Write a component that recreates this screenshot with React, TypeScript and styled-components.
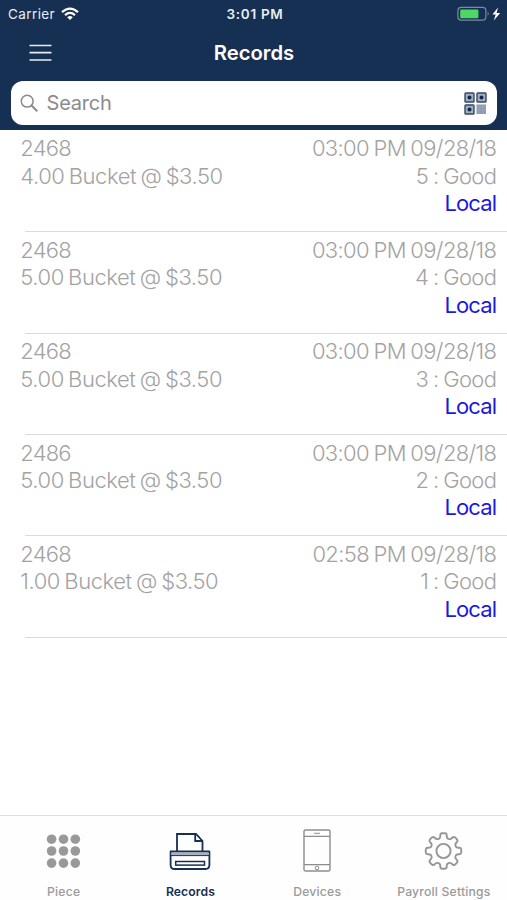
import React from "react";
import styled, { createGlobalStyle } from "styled-components";

const NAVY = "#163053";
const GREY = "#a3a3a3";

const GlobalStyle = createGlobalStyle`
  * { box-sizing: border-box; }
  body { margin: 0; background: #fff; }
`;

const Screen = styled.div`
  width: 507px;
  height: 900px;
  display: flex;
  flex-direction: column;
  overflow: hidden;
  background: #fff;
  font-family: Inter, "Liberation Sans", sans-serif;
`;

const Header = styled.header`
  flex: none;
  height: 130.4px;
  background: ${NAVY};
  color: #fff;
`;

const StatusBar = styled.div`
  display: grid;
  grid-template-columns: 1fr auto 1fr;
  align-items: center;
  height: 27px;
  padding: 0 5px 0 8px;
  font-size: 13.5px;
  color: #e8eef5;
`;

const Carrier = styled.div`
  display: flex;
  align-items: center;
  gap: 6px;
  letter-spacing: 0.4px;
`;

const Clock = styled.div`
  font-size: 13.5px;
  font-weight: 600;
  letter-spacing: 0.7px;
`;

const Power = styled.div`
  display: flex;
  justify-content: flex-end;
  align-items: center;
`;

const NavBar = styled.div`
  display: grid;
  grid-template-columns: 80px 1fr 80px;
  align-items: center;
  height: 50px;
`;

const MenuButton = styled.button`
  display: flex;
  padding: 2px 0 0 29px;
  border: 0;
  background: none;
`;

const Title = styled.h1`
  margin: 0;
  padding: 2px 0 0 1px;
  text-align: center;
  font-size: 20.3px;
  line-height: 26px;
  font-weight: 600;
`;

const SearchBox = styled.div`
  display: flex;
  align-items: center;
  height: 44px;
  margin: 4.4px 10px 0 11px;
  padding: 0 10px 0 9px;
  border-radius: 12px;
  background: #fff;
`;

const SearchLabel = styled.span`
  flex: 1;
  margin-left: 7.5px;
  font-size: 20px;
  letter-spacing: -0.2px;
  color: #8b8b8d;
`;

const List = styled.main`
  flex: 1;
  padding-top: 0.5px;
`;

const Row = styled.section`
  height: 101.4px;
  padding: 4.5px 10px 0 20.3px;
  display: grid;
  grid-template-columns: auto auto;
  grid-template-rows: repeat(3, 27.4px) 1fr;
  justify-content: space-between;
  font-size: 22px;
  line-height: 27.4px;
  font-weight: 300;
  color: ${GREY};
  white-space: nowrap;
`;

const Cell = styled.span<{ $spacing?: number; $word?: number }>`
  letter-spacing: ${(p) => p.$spacing ?? 0}px;
  word-spacing: ${(p) => p.$word ?? 0}px;
`;

const EndCell = styled(Cell)`
  text-align: right;
  margin-right: ${(p) => -(p.$spacing ?? 0)}px;
`;

const Local = styled(EndCell)`
  grid-column: 2;
  font-weight: 400;
  color: #1c18dc;
`;

const Rule = styled.div`
  grid-column: 1 / -1;
  align-self: end;
  height: 1px;
  margin: 0 -10px 0 4.7px;
  background: #dcdcdd;
`;

const TabBar = styled.nav`
  flex: none;
  height: 85px;
  display: grid;
  grid-template-columns: repeat(4, 1fr);
  border-top: 1px solid #dedede;
  background: #fefefe;
`;

const Tab = styled.div<{ $active?: boolean }>`
  display: flex;
  flex-direction: column;
  align-items: center;
  padding-left: 0.6px;
  color: ${(p) => (p.$active ? NAVY : "#9a9a9a")};
  svg { margin-top: 11px; }
`;

const TabLabel = styled.span<{ $active?: boolean; $spacing: number }>`
  margin-top: 9px;
  font-size: 12.2px;
  line-height: 16px;
  font-weight: ${(p) => (p.$active ? 600 : 500)};
  letter-spacing: ${(p) => p.$spacing}px;
  white-space: nowrap;
`;

const Wifi = () => (
  <svg width="18" height="14" viewBox="0 0 18 14" fill="none" stroke="#fff" strokeWidth="2.2">
    <path d="M1 5.1Q9-2 17 5.1" />
    <path d="M4 8.1Q9 3.8 14 8.1" />
    <path d="M6.2 10.2Q9 8 11.8 10.2L9 13Z" fill="#fff" stroke="none" />
  </svg>
);

const Battery = () => (
  <svg width="45" height="16" viewBox="0 0 45 16">
    <rect x=".9" y="1.4" width="28" height="12.8" rx="3.4" fill="none" stroke="#7c8a9f" strokeWidth="1.2" />
    <rect x="3.2" y="3.5" width="18.2" height="8.7" rx="1.2" fill="#4cd863" />
    <path d="M30.7 5.6q2 2.2 0 4.4Z" fill="#7c8a9f" />
    <path d="M41 1.6 35.4 8.6h3.3L36.8 14.4l6.4-7.5h-3.6Z" fill="#fff" />
  </svg>
);

const MenuIcon = () => (
  <svg width="23" height="18" viewBox="0 0 23 18" stroke="#e8edf3" strokeWidth="1.7">
    <path d="M.5 1.5h22M.5 8.7h22M.5 16h22" />
  </svg>
);

const SearchIcon = () => (
  <svg width="19" height="19" viewBox="0 0 19 19" fill="none" stroke="#8b8b8d" strokeWidth="1.5">
    <circle cx="7.2" cy="7.2" r="5.9" />
    <path d="M11.5 11.5 17.3 17.3" strokeWidth="2" />
  </svg>
);

const finders = [[0, 0], [12, 0], [0, 12]];
const QrIcon = () => (
  <svg width="23" height="23" viewBox="0 0 23 23">
    {finders.map(([x, y]) => (
      <g key={`${x}-${y}`} transform={`translate(${x} ${y})`}>
        <rect x="1" y="1" width="9" height="9" rx=".8" fill="#a4afbe" stroke="#35486a" strokeWidth="1.4" />
        <circle cx="5.5" cy="5.5" r="2" fill="#10284d" />
      </g>
    ))}
    <path d="M12.5 12.5h9.5v9.5h-9.5Z" fill="#8c9bad" />
    <path d="M12.5 15h9.5M12.5 18h9.5M15 12.5v9.5M19 12.5v9.5" stroke="#a5b0bd" strokeWidth=".6" />
  </svg>
);

const dots = [6.6, 18.5, 30.3];
const dotRows = [12.2, 24, 36.1];
const GridIcon = () => (
  <svg width="37" height="48" viewBox="0 0 37 48" fill="#999">
    {dotRows.map((y) => dots.map((x) => <circle key={`${x}-${y}`} cx={x} cy={y} r="4.8" />))}
  </svg>
);

const PrinterIcon = () => (
  <svg width="42" height="48" viewBox="0 0 42 48" fill="none" stroke={NAVY} strokeWidth="1.8">
    <path d="M8 24V7h19l6.5 7V24" />
    <path d="M26.2 7v7h7" />
    <path d="M1.6 24.5h38.8V38q0 4-4 4H5.6q-4 0-4-4Z" strokeLinejoin="round" />
    <path d="M2.3 25.4h37.4v2.7H2.3Z" fill="#a6b0c0" stroke="none" />
    <path d="M2 28.6h38" strokeWidth="1" />
    <rect x="6.7" y="34.5" width="28.8" height="3.6" strokeWidth="1.5" />
  </svg>
);

const PhoneIcon = () => (
  <svg width="30" height="48" viewBox="0 0 30 48" fill="none" stroke="#8d8d8d" strokeWidth="1.4">
    <rect x="2" y="3" width="26" height="41" rx="1.4" />
    <path d="M2 9.4h26M2 37.6h26" />
    <path d="M12 6.4h6" stroke="#aaa" />
    <circle cx="15" cy="40.9" r="1.8" strokeWidth="1" />
  </svg>
);

const gearPath = (() => {
  const profile = [[-19.5, 13.1], [-13, 14], [-10.5, 17.8], [0, 17.9], [10.5, 17.8], [13, 14], [19.5, 13.1]];
  const points: number[][] = [];
  for (let tooth = 0; tooth < 8; tooth++) {
    profile.forEach(([angle, radius]) => {
      const a = ((tooth * 45 + angle) * Math.PI) / 180;
      points.push([19.5 + radius * Math.sin(a), 24 - radius * Math.cos(a)]);
    });
  }
  const mid = (a: number[], b: number[]) => `${((a[0] + b[0]) / 2).toFixed(2)} ${((a[1] + b[1]) / 2).toFixed(2)}`;
  const curves = points.map((p, i) => `Q${p[0].toFixed(2)} ${p[1].toFixed(2)} ${mid(p, points[(i + 1) % points.length])}`);
  return `M${mid(points[points.length - 1], points[0])}${curves.join("")}Z`;
})();

const GearIcon = () => (
  <svg width="40" height="48" viewBox="0 0 40 48" fill="none" stroke="#969696" strokeWidth="1.9">
    <path d={gearPath} />
    <circle cx="19.5" cy="24" r="7.1" />
  </svg>
);

const records = [
  { id: "2468", piece: "4.00 Bucket @ $3.50", time: "03:00 PM 09/28/18", grade: "5 : Good" },
  { id: "2468", piece: "5.00 Bucket @ $3.50", time: "03:00 PM 09/28/18", grade: "4 : Good" },
  { id: "2468", piece: "5.00 Bucket @ $3.50", time: "03:00 PM 09/28/18", grade: "3 : Good" },
  { id: "2486", piece: "5.00 Bucket @ $3.50", time: "03:00 PM 09/28/18", grade: "2 : Good" },
  { id: "2468", piece: "1.00 Bucket @ $3.50", time: "02:58 PM 09/28/18", grade: "1 : Good" },
];

export default function App() {
  return (
    <>
      <GlobalStyle />
      <Screen>
        <Header>
          <StatusBar>
            <Carrier>Carrier<Wifi /></Carrier>
            <Clock>3:01 PM</Clock>
            <Power><Battery /></Power>
          </StatusBar>
          <NavBar>
            <MenuButton aria-label="Menu"><MenuIcon /></MenuButton>
            <Title>Records</Title>
          </NavBar>
          <SearchBox>
            <SearchIcon />
            <SearchLabel>Search</SearchLabel>
            <QrIcon />
          </SearchBox>
        </Header>
        <List>
          {records.map((r, i) => (
            <Row key={i}>
              <Cell $spacing={-0.8}>{r.id}</Cell>
              <EndCell $spacing={-0.65} $word={-1}>{r.time}</EndCell>
              <Cell $spacing={-0.45} $word={-1.4}>{r.piece}</Cell>
              <EndCell $spacing={-0.65} $word={-0.8}>{r.grade}</EndCell>
              <Local $spacing={-0.9}>Local</Local>
              <Rule />
            </Row>
          ))}
        </List>
        <TabBar>
          <Tab><GridIcon /><TabLabel $spacing={0.2}>Piece</TabLabel></Tab>
          <Tab $active><PrinterIcon /><TabLabel $active $spacing={0.1}>Records</TabLabel></Tab>
          <Tab><PhoneIcon /><TabLabel $spacing={0.2}>Devices</TabLabel></Tab>
          <Tab><GearIcon /><TabLabel $spacing={0.2}>Payroll Settings</TabLabel></Tab>
        </TabBar>
      </Screen>
    </>
  );
}
